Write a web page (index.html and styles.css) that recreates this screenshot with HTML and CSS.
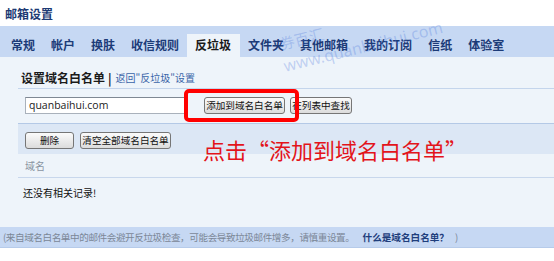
FILE: index.html
```html
<!DOCTYPE html>
<html lang="zh-CN">
<head>
<meta charset="utf-8">
<title>邮箱设置</title>
<link rel="stylesheet" href="styles.css">
</head>
<body>
<div class="page">
  <div class="title">邮箱设置</div>
  <div class="tabs">
    <span class="tab">常规</span>
    <span class="tab">帐户</span>
    <span class="tab">换肤</span>
    <span class="tab">收信规则</span>
    <span class="tab active">反垃圾</span>
    <span class="tab">文件夹</span>
    <span class="tab">其他邮箱</span>
    <span class="tab">我的订阅</span>
    <span class="tab">信纸</span>
    <span class="tab">体验室</span>
  </div>
  <div class="panel">
    <div class="sec-head">
      <span class="sec-title">设置域名白名单</span>
      <span class="sep">|</span>
      <a class="back">返回"反垃圾"设置</a>
    </div>
    <div class="form-row">
      <div class="input">quanbaihui.com</div>
      <span class="btn btn-add">添加到域名白名单</span>
      <span class="btn btn-find">在列表中查找</span>
    </div>
    <div class="band">
      <span class="btn btn-del">删除</span>
      <span class="btn btn-clear">清空全部域名白名单</span>
    </div>
    <div class="list-head">域名</div>
    <div class="empty">还没有相关记录!</div>
  </div>
  <div class="footer">
    <span class="note">(来自域名白名单中的邮件会避开反垃圾检查，可能会导致垃圾邮件增多，请慎重设置。</span>
    <a class="help">什么是域名白名单？</a>
    <span class="note">)</span>
  </div>

  <div class="wm wm1">券百汇</div>
  <div class="wm wm2">www.quanbaihui.com</div>
  <div class="redbox"></div>
  <div class="callout">点击“添加到域名白名单”</div>
</div>
</body>
</html>
```

FILE: styles.css
```css
html, body {
  margin: 0;
  padding: 0;
  background: #ffffff;
}
body {
  font-family: "Noto Sans CJK SC", "Noto Sans", sans-serif;
  color: #222;
}
.page {
  position: relative;
  width: 554px;
  height: 261px;
  overflow: hidden;
}
.title {
  height: 26px;
  line-height: 28px;
  padding-left: 5px;
  font-size: 12px;
  font-weight: bold;
  color: #1d3a74;
}
.tabs {
  height: 31px;
  background: #c6d8f3;
  display: flex;
  align-items: flex-end;
  padding-left: 3px;
  box-sizing: border-box;
}
.tab {
  height: 23px;
  line-height: 22px;
  padding: 0 8px;
  font-size: 12px;
  font-weight: bold;
  color: #1c3b78;
  white-space: nowrap;
}
.tab.active {
  background: #eef4fa;
  color: #1a1a1a;
  padding: 0 9px 0 8px;
}
.panel {
  background: #eef4fa;
  height: 170px;
  padding-left: 18px;
  box-sizing: border-box;
}
.sec-head {
  height: 32px;
  padding-top: 10px;
  padding-left: 3px;
  box-sizing: border-box;
  border-bottom: 1px solid #c4d5ec;
  display: flex;
  align-items: center;
  line-height: 16px;
}
.sec-title {
  font-size: 12px;
  font-weight: bold;
  color: #1a1a1a;
}
.sep {
  font-size: 12px;
  font-weight: bold;
  color: #1a1a1a;
  margin: 0 4px 0 3px;
}
.back {
  font-size: 10px;
  color: #3a64a8;
}
.form-row {
  height: 35px;
  box-sizing: border-box;
  padding: 8px 0 0 7px;
  border-bottom: 1px solid #b4c9e6;
  display: flex;
  align-items: flex-start;
}
.input {
  width: 160px;
  height: 17px;
  box-sizing: border-box;
  background: #fff;
  border: 1px solid #a9b1bb;
  border-top-color: #7f8893;
  font-family: "Open Sans", "Noto Sans", sans-serif;
  font-size: 10.5px;
  line-height: 15px;
  padding-left: 3px;
  color: #222;
}
.btn {
  display: inline-block;
  height: 17px;
  box-sizing: border-box;
  border: 1px solid #767676;
  border-radius: 3px;
  background: linear-gradient(#fbfbfb, #dcdcdc);
  font-size: 9.6px;
  line-height: 15px;
  color: #111;
  text-align: center;
  white-space: nowrap;
  padding: 0;
}
.btn-add {
  margin-left: 19px;
  width: 81px;
}
.btn-find {
  margin-left: 5px;
  width: 62px;
}
.band {
  height: 30px;
  background: #dce7f5;
  box-sizing: border-box;
  padding: 8px 0 0 7px;
  display: flex;
  align-items: flex-start;
}
.btn-del {
  width: 49px;
}
.btn-clear {
  width: 91px;
  margin-left: 6px;
}
.list-head {
  height: 24px;
  box-sizing: border-box;
  border-bottom: 1px solid #c8d7ec;
  padding-left: 7px;
  line-height: 23px;
  font-size: 10px;
  color: #8a95a2;
}
.empty {
  padding: 8px 0 0 5px;
  line-height: 14px;
  font-size: 10px;
  color: #111;
}
.footer {
  height: 21px;
  background: #c6d8f3;
  border-bottom: 1px solid #b6cbea;
  box-sizing: border-box;
  line-height: 21px;
  padding-left: 3px;
  font-size: 9.6px;
  white-space: nowrap;
}
.note {
  color: #7b8797;
  letter-spacing: -0.42px;
}
.help {
  color: #1f3e7c;
  font-weight: bold;
  margin-left: 6px;
  margin-right: 4px;
}
.wm {
  position: absolute;
  color: rgba(80, 120, 220, 0.3);
  white-space: nowrap;
  transform-origin: left bottom;
}
.wm1 {
  left: 282px;
  top: 35px;
  font-size: 15px;
  line-height: 18px;
  transform: rotate(-14deg);
}
.wm2 {
  left: 286px;
  top: 57px;
  font-family: "Noto Sans", sans-serif;
  font-size: 16px;
  line-height: 18px;
  transform: rotate(-14deg);
}
.redbox {
  position: absolute;
  left: 184px;
  top: 89px;
  width: 115px;
  height: 33px;
  box-sizing: border-box;
  border: 4px solid #ff0000;
  border-radius: 5px;
}
.callout {
  position: absolute;
  left: 203px;
  top: 135px;
  font-size: 22px;
  line-height: 28px;
  color: #e3141b;
  white-space: nowrap;
}
```
